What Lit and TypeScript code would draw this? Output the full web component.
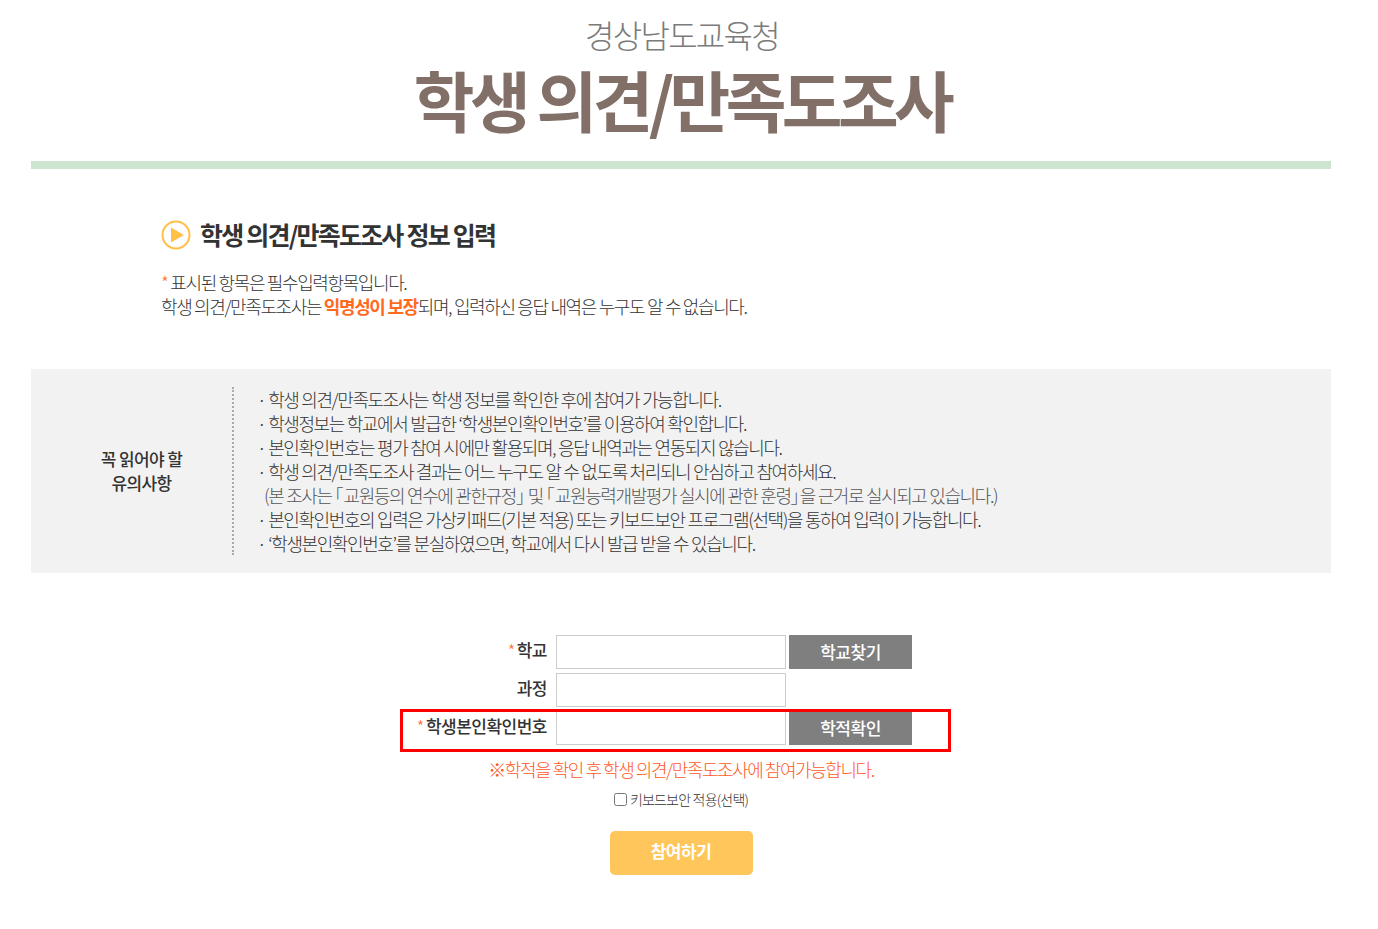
import { LitElement, html, css } from "lit";
import { customElement } from "lit/decorators.js";

@customElement("app-root")
export class AppRoot extends LitElement {
  static styles = css`
    :host { display: block; width: 1378px; height: 929px; overflow: hidden; background: #fff; font-family: "Noto Sans CJK KR", "Noto Sans", sans-serif; color: #333; position: relative; }
    .wrap { width: 1300px; margin-left: 31px; }
    header { text-align: center; height: 161px; padding-left: 2px; border-bottom: 8px solid #cde4d0; box-sizing: content-box; }
    .org { font-size: 32px; font-weight: 300; letter-spacing: -1.7px; color: #7b7b7b; line-height: 40px; padding-top: 14px; }
    h1 { margin: 0; font-size: 66px; font-weight: 700; letter-spacing: -4.6px; color: #816f68; line-height: 88px; }
    .intro { padding: 47px 0 0 130px; height: 200px; box-sizing: border-box; }
    .intro h2 { margin: 0; display: flex; align-items: center; gap: 9px; font-size: 25px; font-weight: 700; letter-spacing: -1.8px; color: #333; line-height: 36px; }
    .intro h2 svg { margin-top: 1px; }
    .intro p { margin: 18px 0 0; font-size: 18px; font-weight: 300; letter-spacing: -1.4px; word-spacing: 0.2px; line-height: 24px; color: #333; }
    .star { color: #ff6a1f; }
    .hl { color: #ff6a1f; font-weight: 700; }
    .notice { background: #f2f2f2; height: 204px; display: flex; padding: 18px 0; box-sizing: border-box; }
    .nt { width: 203px; height: 168px; padding-left: 20px; box-sizing: border-box; border-right: 2px dotted #aaa; flex: none; display: flex; align-items: center; justify-content: center; text-align: center; font-size: 17px; font-weight: 500; letter-spacing: -0.6px; line-height: 24px; color: #333; }
    .nb { margin: 0 0 0 23px; padding: 0; list-style: none; font-size: 18px; font-weight: 300; letter-spacing: -1.4px; word-spacing: 0.2px; line-height: 24px; color: #333; }
    .nb .sub { padding-left: 7px; color: #555; }
    .br { font-feature-settings: "halt"; letter-spacing: 0.1px; }
    form { margin-top: 62px; display: grid; grid-template-columns: 525px 230px 123px; column-gap: 0; row-gap: 4px; position: relative; }
    label { text-align: right; padding-right: 9px; font-size: 17px; font-weight: 500; letter-spacing: -0.5px; line-height: 30px; color: #333; }
    label .star { font-weight: 300; margin-right: 2px; }
    .in { width: 230px; height: 34px; box-sizing: border-box; border: 1px solid #ccc; background: #fff; padding: 0; display: block; }
    .btn { margin-left: 3px; width: 123px; height: 34px; border: 0; background: #7f7f7f; color: #fff; font: 500 17px "Noto Sans CJK KR", sans-serif; letter-spacing: -0.5px; padding: 0 0 2px; }
    .msg { text-align: center; margin-top: 12px; font-size: 18px; font-weight: 300; letter-spacing: -1.45px; line-height: 24px; color: #ff5a1f; }
    .kb { display: flex; justify-content: center; align-items: center; margin-top: 7px; font-size: 14px; font-weight: 300; letter-spacing: -0.8px; line-height: 22px; color: #333; gap: 3px; }
    .kb input { margin: 0; width: 13px; height: 13px; }
    .go { display: block; margin: 21px auto 0; width: 143px; height: 44px; border: 0; border-radius: 5px; background: #ffc65c; color: #fff; font: 700 17px "Noto Sans CJK KR", sans-serif; letter-spacing: -0.5px; padding: 0 0 5px; }
    .mark { position: absolute; left: 400px; top: 709px; width: 551px; height: 43px; box-sizing: border-box; border: 3px solid #f00; pointer-events: none; }
  `;

  render() {
    return html`
      <div class="wrap">
        <header>
          <div class="org">경상남도교육청</div>
          <h1>학생 의견/만족도조사</h1>
        </header>
        <section class="intro">
          <h2>
            <svg width="30" height="30" viewBox="0 0 30 30">
              <circle cx="15" cy="15" r="13.5" fill="none" stroke="#ffc047" stroke-width="2" />
              <path d="M10 7.5 L23 15 L10 22.5 Z" fill="#ffc047" />
            </svg>
            학생 의견/만족도조사 정보 입력
          </h2>
          <p>
            <span class="star">*</span> 표시된 항목은 필수입력항목입니다.<br />
            학생 의견/만족도조사는 <span class="hl">익명성이 보장</span>되며, 입력하신 응답 내역은 누구도 알 수 없습니다.
          </p>
        </section>
        <section class="notice">
          <div class="nt">꼭 읽어야 할<br />유의사항</div>
          <ul class="nb">
            <li>· 학생 의견/만족도조사는 학생 정보를 확인한 후에 참여가 가능합니다.</li>
            <li>· 학생정보는 학교에서 발급한 ‘학생본인확인번호’를 이용하여 확인합니다.</li>
            <li>· 본인확인번호는 평가 참여 시에만 활용되며, 응답 내역과는 연동되지 않습니다.</li>
            <li>· 학생 의견/만족도조사 결과는 어느 누구도 알 수 없도록 처리되니 안심하고 참여하세요.</li>
            <li class="sub">(본 조사는 <span class="br">「</span>교원등의 연수에 관한규정<span class="br">」</span> 및 <span class="br">「</span>교원능력개발평가 실시에 관한 훈령<span class="br">」</span>을 근거로 실시되고 있습니다.)</li>
            <li>· 본인확인번호의 입력은 가상키패드(기본 적용) 또는 키보드보안 프로그램(선택)을 통하여 입력이 가능합니다.</li>
            <li>· ‘학생본인확인번호’를 분실하였으면, 학교에서 다시 발급 받을 수 있습니다.</li>
          </ul>
        </section>
        <form>
          <label><span class="star">*</span>학교</label>
          <input class="in" type="text" />
          <button class="btn" type="button">학교찾기</button>
          <label>과정</label>
          <input class="in" type="text" />
          <span></span>
          <label><span class="star">*</span>학생본인확인번호</label>
          <input class="in" type="text" />
          <button class="btn" type="button">학적확인</button>
        </form>
        <div class="msg">※학적을 확인 후 학생 의견/만족도조사에 참여가능합니다.</div>
        <div class="kb"><input type="checkbox" /><span>키보드보안 적용(선택)</span></div>
        <button class="go" type="button">참여하기</button>
      </div>
      <div class="mark"></div>
    `;
  }
}
